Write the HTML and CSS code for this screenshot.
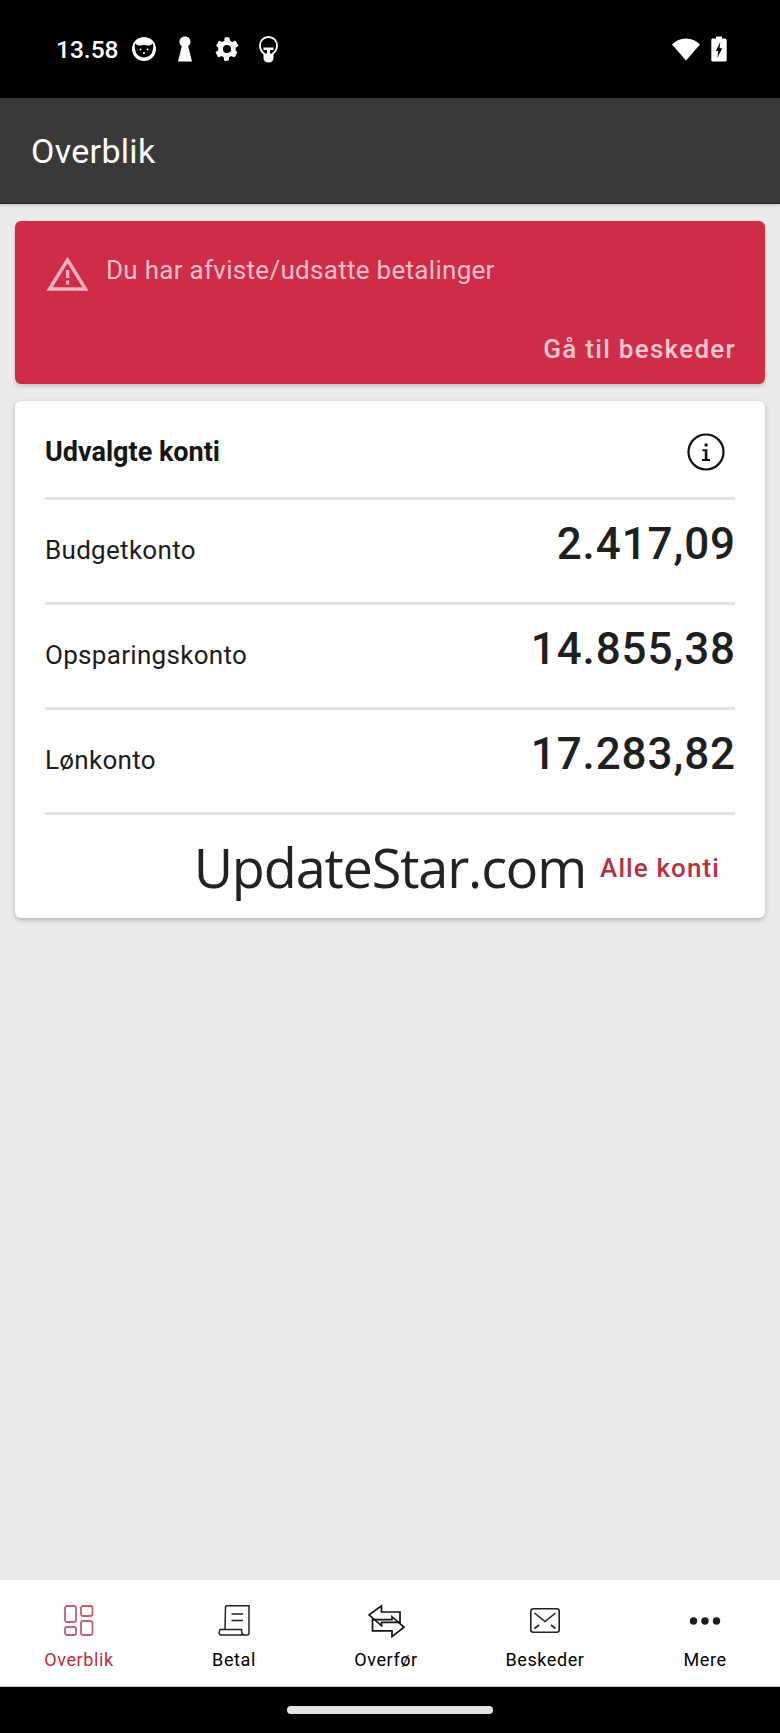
FILE: index.html
```html
<!DOCTYPE html>
<html lang="da">
<head>
<meta charset="utf-8">
<title>Overblik</title>
<link rel="stylesheet" href="styles.css">
</head>
<body>
<div class="screen">
  <header class="status">
    <div class="status-left">
      <span class="clock">13.58</span>
      <svg class="si" width="24" height="24" viewBox="0 0 24 24"><circle cx="12" cy="12" r="12" fill="#fff"/><path d="M3 6.500 L7 8.800 C10 7.800 14 7.800 17 8.800 L21 6.500 C21.800 12 20.500 20.500 12 20.500 C3.500 20.500 2.200 12 3 6.500Z" fill="#000"/><circle cx="8.500" cy="12.500" r="1" fill="#fff"/><circle cx="15.500" cy="12.500" r="1" fill="#fff"/><circle cx="12" cy="16" r="1" fill="#fff"/></svg>
      <svg class="si key" width="16" height="26" viewBox="0 0 16 26"><path d="M8 0.500 C11.500 0.500 13.500 3 13.500 5.800 C13.500 8 12.400 9.400 11.200 10.200 L15 25.500 L1 25.500 L4.800 10.200 C3.600 9.400 2.500 8 2.500 5.800 C2.500 3 4.500 0.500 8 0.500Z" fill="#fff"/></svg>
      <svg class="si gear" width="28" height="28" viewBox="0 0 24 24"><path fill="#fff" d="M19.400 13c.04-.33.06-.66.06-1s-.02-.67-.06-1l2.100-1.650a.5.5 0 0 0 .12-.64l-2-3.460a.5.5 0 0 0-.6-.22l-2.490 1a7.300 7.300 0 0 0-1.700-.98L14 2.420A.5.5 0 0 0 13.500 2h-3a.5.5 0 0 0-.5.42l-.38 2.650c-.6.25-1.180.58-1.700.98l-2.490-1a.5.5 0 0 0-.6.22l-2 3.460a.5.5 0 0 0 .12.64L4.550 11a7.900 7.900 0 0 0 0 2l-2.100 1.650a.5.5 0 0 0-.12.64l2 3.460c.12.22.38.3.6.22l2.490-1c.52.4 1.100.73 1.700.98l.38 2.650c.04.24.25.42.5.42h3c.25 0 .46-.18.5-.42l.38-2.650c.6-.25 1.180-.58 1.700-.98l2.490 1c.22.08.48 0 .6-.22l2-3.460a.5.5 0 0 0-.12-.64L19.400 13zM12 15.500a3.500 3.500 0 1 1 0-7 3.500 3.500 0 0 1 0 7z"/></svg>
      <svg class="si bulb" width="19" height="27" viewBox="0 0 19 27"><path d="M5.500 18 C2.800 16 1 13.500 1 9.800 C1 4.600 4.700 1 9.500 1 C14.300 1 18 4.600 18 9.800 C18 13.500 16.200 16 13.500 18" fill="none" stroke="#fff" stroke-width="1.800"/><path d="M4.500 11.500 H14.500 V14 H11 V17.500 H14.500 V22 C14.500 24.800 12.500 26.500 9.500 26.500 C6.500 26.500 4.500 24.800 4.500 22 V17.500 H8 V14 H4.500Z" fill="#fff"/></svg>
    </div>
    <div class="status-right">
      <svg width="30" height="24" viewBox="0 0 30 24"><path d="M15 23.500 L1 7.500 C4.800 3.600 9.600 1.500 15 1.500 C20.400 1.500 25.200 3.600 29 7.500Z" fill="#fff"/></svg>
      <svg width="16" height="26" viewBox="0 0 16 26"><path fill-rule="evenodd" d="M5 0.500 H11 V2.500 H14 C15 2.500 15.700 3.200 15.700 4 V24 C15.700 25 15 25.500 14 25.500 H2 C1 25.500 0.300 25 0.300 24 V4 C0.300 3.200 1 2.500 2 2.500 H5Z M9.300 6 L4.800 15 H7.300 L6.300 22 L11.200 12.200 H8.500Z" fill="#fff"/></svg>
    </div>
  </header>

  <div class="appbar"><h1>Overblik</h1></div>

  <main class="content">
    <section class="alert">
      <div class="alert-msg">
        <svg class="alert-icon" width="44" height="38" viewBox="0 0 44 38"><path d="M21.500 5 L39.500 34 H3.500Z" fill="none" stroke="#f6b3c1" stroke-width="3.400"/><rect x="20" y="15" width="3.200" height="8" fill="#f6b3c1"/><rect x="20" y="25.500" width="3.200" height="4" fill="#f6b3c1"/></svg>
        <p>Du har afviste/udsatte betalinger</p>
      </div>
      <div class="alert-action">Gå til beskeder</div>
    </section>

    <section class="card">
      <div class="card-head">
        <h2>Udvalgte konti</h2>
        <svg width="38" height="38" viewBox="0 0 38 38"><circle cx="19" cy="19" r="17.500" fill="none" stroke="#111" stroke-width="2.200"/><rect x="17.600" y="10.500" width="3" height="3" fill="#111"/><path d="M15.500 16.200 H20.400 V26 H23 V28 H15 V26 H17.800 V18.200 H15.500Z" fill="#111"/></svg>
      </div>
      <div class="row"><span class="name">Budgetkonto</span><span class="amount">2.417,09</span></div>
      <div class="row"><span class="name">Opsparingskonto</span><span class="amount">14.855,38</span></div>
      <div class="row"><span class="name">Lønkonto</span><span class="amount">17.283,82</span></div>
      <div class="card-foot">
        <span class="mark">UpdateStar.com</span>
        <span class="all">Alle konti</span>
      </div>
    </section>
  </main>

  <nav class="tabs">
    <div class="tab tab-active">
      <svg width="34" height="34" viewBox="0 0 34 34" fill="none" stroke="#c6606f" stroke-width="1.800"><rect x="3" y="2" width="11" height="16" rx="2"/><rect x="19" y="2" width="11.500" height="10" rx="2"/><rect x="3" y="23" width="11" height="8" rx="2"/><rect x="19" y="17" width="11.500" height="14" rx="2"/></svg>
      <span>Overblik</span>
    </div>
    <div class="tab">
      <svg width="34" height="34" viewBox="0 0 34 34" fill="none" stroke="#222" stroke-width="1.500"><path d="M8 25 L8.500 3 Q8.500 1.800 10 1.800 H32 V29 Q32 31 30 31 H27.500 Q24.500 31 24.500 25.500 H3 Q0.500 31 5 31 H27.500"/><path d="M14.500 10 H26 M14.500 16.500 H26"/></svg>
      <span>Betal</span>
    </div>
    <div class="tab">
      <svg width="38" height="34" viewBox="0 0 38 36" preserveAspectRatio="none" fill="none" stroke="#111" stroke-width="1.700"><path d="M2 11.500 L14.500 2 V8.500 H33 V19.500 H14.500 V23Z"/><path d="M37 24.500 L25 13.500 V16.500 H5.500 V28.500 H25 V34.500Z"/></svg>
      <span>Overfør</span>
    </div>
    <div class="tab">
      <svg width="34" height="34" viewBox="0 0 34 34" fill="none" stroke="#222" stroke-width="1.600"><rect x="2.800" y="4.800" width="28.400" height="23.400" rx="2.500"/><path d="M6.500 9 L17 17.500 L27.500 9 M6.500 24.500 L11 21 M27.500 24.500 L23 21"/></svg>
      <span>Beskeder</span>
    </div>
    <div class="tab">
      <svg width="34" height="34" viewBox="0 0 34 34" fill="#1c1c1c"><circle cx="5.500" cy="17" r="3.700"/><circle cx="17" cy="17" r="3.700"/><circle cx="28.500" cy="17" r="3.700"/></svg>
      <span>Mere</span>
    </div>
  </nav>

  <footer class="gesture"><div class="pill"></div></footer>
</div>
</body>
</html>
```
FILE: styles.css
```css
* { box-sizing: border-box; }
html, body { margin: 0; padding: 0; }
body { font-family: Roboto, "Liberation Sans", sans-serif; background: #ecebe9; }
.screen { width: 780px; height: 1733px; display: flex; flex-direction: column; background: #ecebe9; overflow: hidden; }

.status { height: 98px; flex: none; background: #000; display: flex; justify-content: space-between; align-items: center; padding: 0 53px 0 56px; }
.status-left { display: flex; align-items: center; }
.clock { color: #fff; font-size: 24.500px; font-weight: 500; width: 76px; }
.si { flex: none; }
.key { margin-left: 21px; }
.gear { margin-left: 20px; }
.bulb { margin-left: 18px; }
.status-right { display: flex; align-items: center; gap: 10px; }

.appbar { height: 106px; flex: none; background: #3a3938; display: flex; align-items: center; padding: 0 31px; border-bottom: 1px solid #222; box-shadow: 0 1px 3px rgba(0,0,0,.2); }
.appbar h1 { margin: 0; color: #fff; font-size: 34px; font-weight: 400; letter-spacing: .3px; }

.content { flex: 1; padding: 17px 15px 0; display: flex; flex-direction: column; gap: 17px; }

.alert { height: 163px; flex: none; background: #cf2c47; border-radius: 6px; box-shadow: 0 2px 4px rgba(0,0,0,.18); padding: 30px 29px 0 31px; display: flex; flex-direction: column; justify-content: space-between; }
.alert-msg { display: flex; align-items: flex-start; gap: 16px; }
.alert-icon { flex: none; margin-top: 4px; }
.alert-msg p { margin: 3px 0 0; color: #f8c0cb; font-size: 26px; line-height: 32px; letter-spacing: .29px; }
.alert-action { color: #f8c8d2; font-size: 26px; font-weight: 500; line-height: 32px; letter-spacing: 1.280px; text-align: right; margin-bottom: 19px; }

.card { height: 517px; flex: none; background: #fff; border-radius: 6px; box-shadow: 0 2px 5px rgba(0,0,0,.25); padding: 0 30px; display: flex; flex-direction: column; }
.card-head { height: 99px; flex: none; display: flex; align-items: center; justify-content: space-between; border-bottom: 3px solid #e3e3e3; padding-top: 5px; }
.card-head h2 { margin: 0; font-size: 27px; font-weight: 700; color: #151515; }
.card-head svg { margin-right: 10px; }
.row { height: 105px; flex: none; display: flex; align-items: center; justify-content: space-between; border-bottom: 3px solid #e3e3e3; }
.name { font-size: 26px; color: #1c1c1c; letter-spacing: .3px; margin-top: -2px; }
.amount { font-size: 44px; font-weight: 500; color: #1f1f1f; letter-spacing: .9px; margin-top: -15px; margin-right: -1px; }
.card-foot { flex: 1; display: flex; align-items: center; justify-content: flex-end; padding-right: 15px; gap: 14px; }
.mark { font-family: "Open Sans", sans-serif; font-size: 54px; font-weight: 400; color: #222; letter-spacing: -1.150px; }
.all { font-size: 26px; font-weight: 500; color: #b8303f; letter-spacing: 1.100px; margin-bottom: -2px; }

.tabs { height: 107px; flex: none; background: #fff; display: flex; align-items: flex-start; border-bottom: 1px solid #ccc; }
.tab { display: flex; flex-direction: column; align-items: center; font-size: 18px; font-weight: 400; color: #000; letter-spacing: .6px; padding-top: 24px; gap: 11px; }
.tab:nth-child(1) { width: 158px; }
.tab:nth-child(2) { width: 152px; }
.tab:nth-child(3) { width: 152px; }
.tab:nth-child(4) { width: 166px; }
.tab:nth-child(5) { width: 152px; padding-left: 2px; }
.tab svg { flex: none; }
.tab span { line-height: 22px; }
.tab-active { color: #b8303f; }

.gesture { height: 46px; flex: none; background: #000; display: flex; justify-content: center; padding-top: 19px; }
.pill { width: 206px; height: 8px; border-radius: 4px; background: #e6e6e6; }
```
